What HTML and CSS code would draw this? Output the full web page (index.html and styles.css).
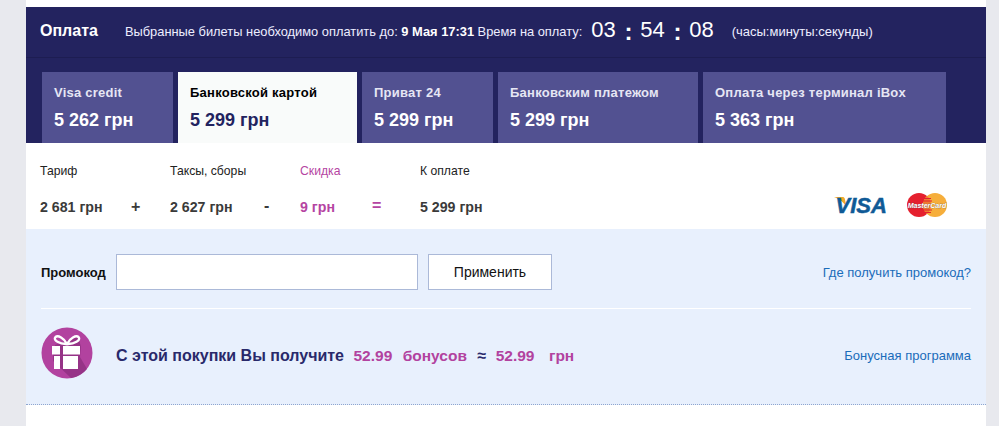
FILE: index.html
```html
<!DOCTYPE html>
<html lang="ru">
<head>
<meta charset="utf-8">
<title>Оплата</title>
<link rel="stylesheet" href="styles.css">
</head>
<body>
<main class="page">
  <section class="pay-head">
    <div class="timer-bar">
      <h1 class="title">Оплата</h1>
      <p class="due">Выбранные билеты необходимо оплатить до: <b>9 Мая 17:31</b> Время на оплату:</p>
      <div class="clock"><span>03</span><i>:</i><span>54</span><i>:</i><span>08</span></div>
      <p class="hint">(часы:минуты:секунды)</p>
    </div>
    <nav class="tabs">
      <a class="tab w1"><span class="tab-name">Visa credit</span><strong>5 262 грн</strong></a>
      <a class="tab w2 active"><span class="tab-name">Банковской картой</span><strong>5 299 грн</strong></a>
      <a class="tab w1"><span class="tab-name">Приват 24</span><strong>5 299 грн</strong></a>
      <a class="tab w3"><span class="tab-name">Банковским платежом</span><strong>5 299 грн</strong></a>
      <a class="tab w4"><span class="tab-name">Оплата через терминал iBox</span><strong>5 363 грн</strong></a>
    </nav>
  </section>

  <section class="summary">
    <div class="col c1"><span>Тариф</span><b>2 681 грн</b></div>
    <div class="op o1">+</div>
    <div class="col c2"><span>Таксы, сборы</span><b>2 627 грн</b></div>
    <div class="op o2">-</div>
    <div class="col c3 pink"><span>Скидка</span><b>9 грн</b></div>
    <div class="op o3 pink">=</div>
    <div class="col c4"><span>К оплате</span><b>5 299 грн</b></div>
    <div class="logos">
      <svg class="visa" width="58" height="26" viewBox="0 0 58 26" aria-label="Visa">
        <path d="M0 4h8.500c1.200 0 2 .6 2.300 1.700l2 9.300C10.500 9.800 5.500 6 0 4z" fill="#f0a92c"/>
        <text x="1.500" y="20" class="visa-text">VISA</text>
      </svg>
      <svg class="mc" width="44" height="24" viewBox="0 0 44 24" aria-label="MasterCard">
        <circle cx="14" cy="12" r="12" fill="#e5202e"/>
        <circle cx="30" cy="12" r="12" fill="#f6ae3b"/>
        <path d="M22 3a12 12 0 0 1 0 18a12 12 0 0 1 0-18z" fill="#ef7a30"/>
        <path d="M18 5.500h8M17 8h10M17 17h10M18 19.500h8" stroke="#e5202e" stroke-width="1"/>
        <text x="22" y="14.500" class="mc-text">MasterCard</text>
      </svg>
    </div>
  </section>

  <section class="promo">
    <form class="promo-row">
      <label class="promo-label" for="code">Промокод</label>
      <input class="promo-input" id="code" type="text">
      <button class="promo-btn" type="button">Применить</button>
      <a class="link">Где получить промокод?</a>
    </form>
    <div class="bonus-row">
      <svg class="gift" width="52" height="52" viewBox="0 0 52 52" aria-hidden="true">
        <circle cx="26" cy="26" r="25.500" fill="#b2429f"/>
        <path d="M37 9L40 20L39 30L46 42A25.500 25.500 0 0 1 30 51L12 34L12 27L14 18z" fill="#8f2f81" opacity=".8"/>
        <g fill="none" stroke="#fff" stroke-width="2.400">
          <path d="M26 17c-3-6-9-9-11.500-7C11.500 13 19 17.500 26 17z"/>
          <path d="M26 17c3-6 9-9 11.500-7C40.500 13 33 17.500 26 17z"/>
        </g>
        <g fill="#fff">
          <rect x="11" y="19" width="8" height="8.500"/>
          <rect x="22" y="19" width="17" height="8.500"/>
          <rect x="13" y="29" width="6" height="13"/>
          <rect x="22" y="29" width="15" height="13"/>
        </g>
      </svg>
      <p class="bonus-text">С этой покупки Вы получите <em class="g1">52.99</em> <em class="g2">бонусов</em> <span class="approx">≈</span> <em class="g3">52.99</em> <em class="g4">грн</em></p>
      <a class="link">Бонусная программа</a>
    </div>
  </section>
</main>
</body>
</html>
```

FILE: styles.css
```css
* { box-sizing: border-box; }
html, body { margin: 0; height: 100%; overflow: hidden; }
body {
  background: #e8e9ee;
  font-family: "Liberation Sans", Arial, sans-serif;
  color: #222;
  padding: 0 13px 0 26px;
}
.page { background: #fff; height: 100%; padding-top: 7px; }

.pay-head { background: #23235f; height: 136px; }
.timer-bar {
  display: flex;
  align-items: center;
  height: 51px;
  padding: 0 14px;
  border-bottom: 1px solid #1d1d52;
  color: #fff;
}
.title { margin: 0 27px 0 0; font-size: 16px; font-weight: 700; line-height: 20px; position: relative; top: -1px; }
.due { margin: 0; font-size: 12.860px; line-height: 16px; color: #eef; }
.due b { color: #fff; }
.clock { display: flex; align-items: center; margin: -4px 0 0 9px; font-size: 22px; line-height: 28px; color: #fff; }
.clock span { display: block; }
.clock i { font-style: normal; font-weight: 700; font-size: 24px; margin: 0 8.750px; width: 7px; text-align: center; position: relative; top: 2px; }
.hint { margin: 0 0 0 18px; font-size: 13px; line-height: 16px; color: #eef; }

.tabs { display: flex; gap: 5px; padding: 14px 0 0 16px; }
.tab {
  display: flex;
  flex-direction: column;
  height: 71px;
  padding: 13px 12px 0;
  background: #525191;
  color: #fff;
}
.tab.w1 { width: 131px; }
.tab.w2 { width: 179px; }
.tab.w3 { width: 200px; }
.tab.w4 { width: 243px; }
.tab.active { background: #f9fbfa; color: #000; }
.tab-name { font-size: 13px; line-height: 16px; font-weight: 700; color: #e6e6f4; letter-spacing: .24px; }
.tab strong { margin-top: 9px; font-size: 18px; line-height: 20px; color: #fff; }
.tab.active .tab-name { color: #000; }
.tab.active strong { color: #23235f; }

.summary { position: relative; display: flex; height: 86px; padding: 21px 14px 0; }
.col { display: flex; flex-direction: column; font-size: 12.200px; color: #222; }
.col span { line-height: 14px; }
.col b { margin-top: 21px; font-size: 14.200px; line-height: 16px; color: #3a3a3a; }
.c1 { width: 130px; }
.c2 { width: 130px; }
.c3 { width: 120px; }
.pink, .pink b { color: #b544a2; }
.op { position: absolute; top: 54px; font-size: 16px; line-height: 18px; font-weight: 700; color: #3a3a3a; }
.op.pink { color: #b544a2; }
.o1 { left: 105px; top: 55px; }
.o2 { left: 238px; }
.o3 { left: 346px; }
.logos { display: flex; align-items: flex-start; gap: 13px; position: absolute; right: 37px; top: 50px; }
.visa-text { font-family: "Liberation Sans", sans-serif; font-weight: 700; font-style: italic; font-size: 22px; fill: #0f5a96; stroke: #0f5a96; stroke-width: .5px; }
.mc-text { font-family: "Liberation Sans", sans-serif; font-weight: 700; font-style: italic; font-size: 7px; fill: #fff; stroke: #555; stroke-width: .3px; paint-order: stroke; text-anchor: middle; }
.mc { display: block; }
.visa { display: block; }

.promo { background: #e8f0fd; height: 176px; border-bottom: 1px dotted #8fa6cf; padding: 0 15px; }
.promo-row { display: flex; align-items: center; height: 80px; border-bottom: 1px solid #fff; padding-top: 7px; }
.promo-label { width: 75px; font-size: 13px; font-weight: 700; color: #111; }
.promo-input { width: 302px; height: 36px; background: #fff; border: 1px solid #abb9d8; padding: 0 8px; margin: 0; border-radius: 0; outline: 0; }
.promo-btn { width: 124px; height: 36px; margin-left: 10px; background: #fff; border: 1px solid #abb9d8; border-radius: 0; font: 14px "Liberation Sans", Arial, sans-serif; color: #111; padding: 0; }
.link { margin-left: auto; font-size: 13px; color: #1a6cba; }
.bonus-row { display: flex; align-items: center; height: 94px; }
.bonus-row .link { margin-bottom: 2px; }
.gift { display: block; flex: none; align-self: flex-start; margin-top: 18px; }
.bonus-text { margin: 0 0 0 23px; font-size: 16px; font-weight: 700; color: #29296b; }
.bonus-text em { font-style: normal; font-size: 15.500px; color: #b2429f; }
.g1 { margin-left: 5px; }
.g2 { margin-left: 6px; }
.g3 { margin-left: 5px; }
.g4 { margin-left: 10px; }
.approx { margin-left: 6px; }
```
